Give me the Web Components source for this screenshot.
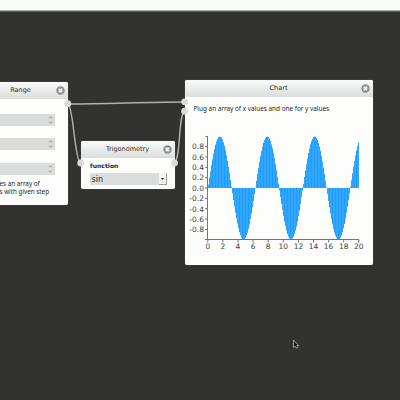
<!DOCTYPE html>
<html lang="en"><head><meta charset="utf-8"><title>Node editor</title>
<style>html,body{margin:0;width:400px;height:400px;overflow:hidden;background:#323230}</style></head>
<body>
<node-editor></node-editor>
<script>
const define=(name,html,init)=>customElements.define(name,class extends HTMLElement{
  constructor(){super();this.attachShadow({mode:'open'}).innerHTML=html;}
  connectedCallback(){if(init)init(this,this.shadowRoot);}
});

define('close-button',`<style>:host{display:block;width:9px;height:9px}svg{display:block}</style>
<svg width="9" height="9" viewBox="0 0 9 9"><circle cx="4.5" cy="4.5" r="4.2" fill="#8d8f8d"/><circle cx="4.5" cy="4.5" r="2.7" fill="#a5a7a5"/><path d="M3 3l3 3M6 3l-3 3" stroke="#fff" stroke-width="1.2"/></svg>`);

define('node-panel',`<style>
:host{display:flex;flex-direction:column;box-sizing:border-box;background:#fdfefc;border-radius:2px;overflow:hidden;box-shadow:0 0 1px #777}
header{flex:none;display:flex;align-items:center;height:17px;padding-right:3px;background:linear-gradient(#fafbfa,#dadddb);font:6.5px/17px "DejaVu Sans",sans-serif;color:#2c2c2c}
.t{flex:1;text-align:center;padding-left:12px;white-space:nowrap}
.b{flex:1;display:flex;flex-direction:column}
</style><header><span class="t"></span><close-button></close-button></header><div class="b"><slot></slot></div>`,
(h,r)=>{r.querySelector('.t').textContent=h.getAttribute('label')});

define('number-field',`<style>:host{display:flex;align-items:center;justify-content:flex-end;height:12px;background:#dadddb;padding-right:2px}svg{display:block}</style>
<svg width="5" height="10" viewBox="0 0 5 10" fill="none" stroke="#858885"><path d="M1 3.3L2.5 1.8L4 3.3M1 6.7L2.5 8.2L4 6.7"/></svg>`);

define('select-field',`<style>:host{display:flex;height:12px;background:#dadddb;font:8px/13px "DejaVu Sans",sans-serif;color:#1c1c1c}
.v{flex:1;padding-left:1.5px}.a{width:7px;background:#f4f5f3;border-right:1px solid #999;border-bottom:1px solid #999;display:flex;align-items:center;justify-content:center}</style>
<span class="v"><slot></slot></span><span class="a"><svg width="3" height="2"><path d="M0 0h3L1.5 2z" fill="#222"/></svg></span>`);

define('value-chart',`<style>:host{display:block}svg{display:block}text{font:7.5px "DejaVu Sans",sans-serif;fill:#3c3c3c}</style><svg width="188" height="138" viewBox="185 126 188 138"></svg>`,
(h,r)=>{
  const x0=208,k=7.55,zero=188,amp=51.5;let s='';
  for(let i=0;i<151;i++){
    const v=Math.sin((i+.5)/k)*amp;
    s+=`<rect x="${x0+i}" y="${Math.min(zero,zero-v)}" width="1" height="${Math.abs(v)}" fill="${i%3==1?'#1c9dff':'#33a7ff'}"/>`;
  }
  s+='<path d="M208 136.5H205.5M207.5 136V239.5M205 239.5H359M358.5 239.5v3" fill="none" stroke="#747674"/>';
  for(let i=-4;i<=4;i++){
    const y=zero-i*10.35;
    s+=`<path d="M205 ${y}h3" stroke="#747674"/><text x="204" y="${y+2.8}" text-anchor="end">${(i/5).toFixed(1)}</text>`;
  }
  for(let i=0;i<=20;i+=2){
    const x=x0+i*k-.2;
    s+=`<path d="M${x} 239.5v3" stroke="#747674"/><text x="${x}" y="249" text-anchor="middle">${i}</text>`;
  }
  r.querySelector('svg').innerHTML=s;
});

define('node-editor',`<style>
:host{display:block;position:relative;width:400px;height:400px;background:#323230;overflow:hidden;font-family:"Noto Sans",sans-serif;color:#262626}
.bar{height:10px;background:#f9fcf9;border-bottom:1px solid #aaadaa}
.line{height:1px;background:#5c5e5c}
node-panel{position:absolute}
.range{left:-27px;top:81.5px;width:95px;height:123.5px}
.trig{left:80.5px;top:141px;width:94px;height:48px}
.chart{left:184.5px;top:79.5px;width:188px;height:185.5px}
.fields{display:flex;flex-direction:column;gap:12.6px;padding:15px 13px 0 12px}
.note{font:6.3px/8px "Noto Sans",sans-serif;padding:5.5px 0 0 26.5px;white-space:nowrap}
.fn{font:bold 6px/8px "DejaVu Sans",sans-serif;padding:4px 0 3px 9.5px;letter-spacing:.05px}
select-field{margin:0 8px 0 9.5px}
.desc{font:6.4px/8px "Noto Sans",sans-serif;padding:8px 0 13px 9px;white-space:nowrap}
svg{position:absolute;inset:0}
</style>
<div class="bar"></div><div class="line"></div>
<node-panel class="range" label="Range"><div class="fields"><number-field></number-field><number-field></number-field><number-field></number-field></div><div class="note">es an array of<br>s with given step</div></node-panel>
<node-panel class="trig" label="Trigonometry"><div class="fn">function</div><select-field>sin</select-field></node-panel>
<node-panel class="chart" label="Chart"><div class="desc">Plug an array of x values and one for y values</div><value-chart></value-chart></node-panel>
<svg width="400" height="400" fill="none"><g stroke="#b0b2af" stroke-width="1.4"><path d="M68 104C110 104 142 102 184 102"/><path d="M68 104C74 109 74 158 80.5 163"/><path d="M174.5 163C181 158 178 116 184.5 111"/></g>
<g fill="#d9dbd8"><circle cx="67.8" cy="103.7" r="3.4"/><circle cx="80.7" cy="163" r="3.4"/><circle cx="174.5" cy="163" r="3.4"/><circle cx="184.6" cy="101.8" r="3.4"/><circle cx="184.6" cy="111.2" r="3.4"/></g>
<path d="M293.5 340v7.5l1.7-1.3 1.4 2 1.3-.7-1-2h1.8z" fill="#171717" stroke="#aaa" stroke-width=".9"/></svg>`);
</script>
</body></html>
